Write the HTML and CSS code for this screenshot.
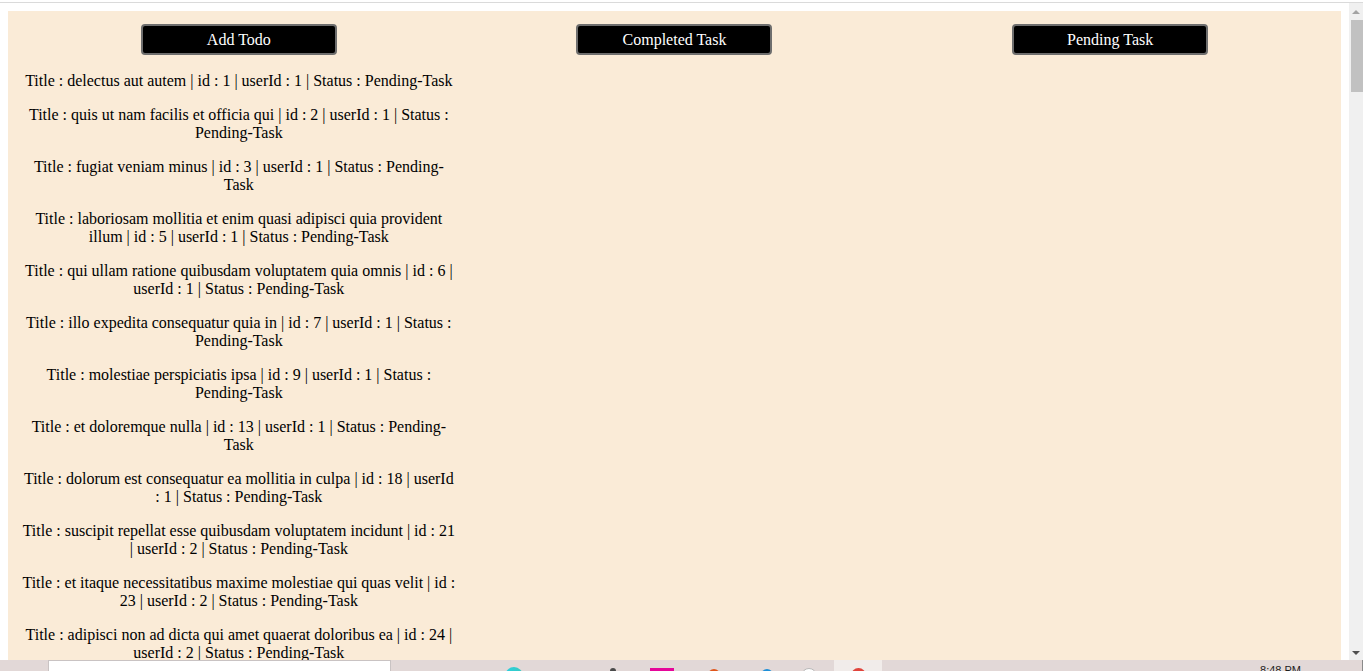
FILE: index.html
```html
<!DOCTYPE html>
<html>
<head>
<meta charset="utf-8">
<link rel="stylesheet" href="styles.css">
</head>
<body>
<div class="screen">
  <div class="topline"></div>
  <div class="window">
    <div class="viewport">
      <div class="panel">
        <div class="col">
          <button class="btn">Add Todo</button>
          <p>Title : delectus aut autem | id : 1 | userId : 1 | Status : Pending-Task</p>
          <p>Title : quis ut nam facilis et officia qui | id : 2 | userId : 1 | Status : Pending-Task</p>
          <p>Title : fugiat veniam minus | id : 3 | userId : 1 | Status : Pending-Task</p>
          <p>Title : laboriosam mollitia et enim quasi adipisci quia provident illum | id : 5 | userId : 1 | Status : Pending-Task</p>
          <p>Title : qui ullam ratione quibusdam voluptatem quia omnis | id : 6 | userId : 1 | Status : Pending-Task</p>
          <p>Title : illo expedita consequatur quia in | id : 7 | userId : 1 | Status : Pending-Task</p>
          <p>Title : molestiae perspiciatis ipsa | id : 9 | userId : 1 | Status : Pending-Task</p>
          <p>Title : et doloremque nulla | id : 13 | userId : 1 | Status : Pending-Task</p>
          <p>Title : dolorum est consequatur ea mollitia in culpa | id : 18 | userId : 1 | Status : Pending-Task</p>
          <p>Title : suscipit repellat esse quibusdam voluptatem incidunt | id : 21 | userId : 2 | Status : Pending-Task</p>
          <p>Title : et itaque necessitatibus maxime molestiae qui quas velit | id : 23 | userId : 2 | Status : Pending-Task</p>
          <p>Title : adipisci non ad dicta qui amet quaerat doloribus ea | id : 24 | userId : 2 | Status : Pending-Task</p>
          <p>Title : voluptas quo tenetur perspiciatis explicabo natus | id : 25 | userId : 2 | Status : Pending-Task</p>
        </div>
        <div class="col">
          <button class="btn">Completed Task</button>
        </div>
        <div class="col">
          <button class="btn">Pending Task</button>
        </div>
      </div>
    </div>
    <div class="scrollbar">
      <div class="arrow up"></div>
      <div class="thumb"></div>
      <div class="track"></div>
      <div class="arrow down"></div>
    </div>
  </div>
  <div class="taskbar">
    <div class="search"></div>
    <div class="tb-icons">
      <span class="ic ic-cyan"></span>
      <span class="ic ic-dark"></span>
      <span class="ic ic-pink"></span>
      <span class="ic ic-orange"></span>
      <span class="ic ic-blue"></span>
      <span class="ic ic-white"></span>
      <span class="ic-active"><span class="ic ic-red"></span></span>
    </div>
    <div class="clock">8:48 PM</div>
  </div>
</div>
</body>
</html>
```
FILE: styles.css
```css
html, body {
  margin: 0;
  padding: 0;
  overflow: hidden;
  background: #ffffff;
}
.screen {
  width: 1363px;
  height: 671px;
  display: flex;
  flex-direction: column;
  overflow: hidden;
}
.topline {
  height: 3px;
  flex: none;
  background: #ffffff;
  border-bottom: 1px solid #dadada;
  box-sizing: border-box;
}
.window {
  flex: none;
  height: 657px;
  display: flex;
  overflow: hidden;
}
.viewport {
  flex: 1;
  padding: 8px 8px 0 8px;
  overflow: hidden;
  background: #ffffff;
}
.panel {
  background: #faebd7;
  padding: 13px 13px 0 13px;
  display: grid;
  grid-template-columns: 1fr 1fr 1fr;
  align-items: start;
  min-height: 700px;
  font-family: "Liberation Serif", "Times New Roman", serif;
  font-size: 16px;
  color: #000;
}
.col {
  display: flex;
  flex-direction: column;
  align-items: center;
  text-align: center;
}
.btn {
  width: 196px;
  height: 31px;
  background: #000;
  color: #fff;
  border: 2px solid #6e6e6e;
  border-radius: 4px;
  font-family: "Liberation Serif", "Times New Roman", serif;
  font-size: 16px;
  padding: 0;
  margin: 0;
}
.col p {
  margin: 16px 0 0 0;
  line-height: 18px;
}
.col p:first-of-type {
  margin-top: 17px;
}
.scrollbar {
  width: 14px;
  flex: none;
  background: #f0f0f0;
  display: flex;
  flex-direction: column;
  align-items: center;
}
.arrow {
  width: 0;
  height: 0;
  border-left: 4px solid transparent;
  border-right: 4px solid transparent;
  flex: none;
}
.arrow.up {
  margin-top: 7px;
  border-bottom: 4px solid #a3a3a3;
}
.arrow.down {
  margin-bottom: 5px;
  border-top: 4px solid #505050;
}
.thumb {
  width: 12px;
  margin-left: 2px;
  height: 72px;
  margin-top: 6px;
  background: #c1c1c1;
  flex: none;
}
.track {
  flex: 1;
}
.taskbar {
  flex: none;
  height: 11px;
  background: #e2d8d7;
  position: relative;
  display: flex;
  align-items: flex-start;
  border-right: 1px solid #8a8a8a;
  box-sizing: border-box;
  overflow: hidden;
}
.search {
  margin-left: 48px;
  width: 343px;
  height: 14px;
  background: #ffffff;
  border: 1px solid #c9c3c3;
  border-bottom: none;
  box-sizing: border-box;
  flex: none;
}
.tb-icons {
  display: flex;
  align-items: flex-start;
  margin-left: 114px;
  height: 11px;
}
.ic {
  display: block;
  flex: none;
}
.ic-cyan {
  width: 18px;
  height: 18px;
  margin-top: 7px;
  border-radius: 50%;
  background: linear-gradient(90deg, #2ad0e0, #37c9c0);
}
.ic-dark {
  width: 6px;
  height: 8px;
  margin-top: 8px;
  margin-left: 87px;
  border-radius: 3px 3px 0 0;
  background: #4a4a4a;
}
.ic-pink {
  width: 24px;
  height: 8px;
  margin-top: 8px;
  margin-left: 34px;
  background: #e5079a;
}
.ic-orange {
  width: 12px;
  height: 8px;
  margin-top: 9px;
  margin-left: 34px;
  border-radius: 6px 6px 0 0;
  background: #e0561b;
}
.ic-blue {
  width: 12px;
  height: 8px;
  margin-top: 9px;
  margin-left: 41px;
  border-radius: 6px 6px 0 0;
  background: #1e8fd8;
}
.ic-white {
  width: 16px;
  height: 16px;
  margin-top: 8px;
  margin-left: 28px;
  border-radius: 50%;
  background: #ffffff;
  border: 1px solid #b8b8b8;
  box-sizing: border-box;
}
.ic-active {
  display: flex;
  justify-content: center;
  width: 48px;
  height: 11px;
  margin-left: 17px;
  background: #f1ecea;
}
.ic-red {
  width: 15px;
  height: 15px;
  margin-top: 8px;
  border-radius: 50%;
  background: #e0443c;
}
.clock {
  margin-left: auto;
  margin-right: 61px;
  margin-top: 4px;
  font-family: "Liberation Sans", Arial, sans-serif;
  font-size: 11px;
  line-height: 12px;
  color: #1e1e1e;
}
```
